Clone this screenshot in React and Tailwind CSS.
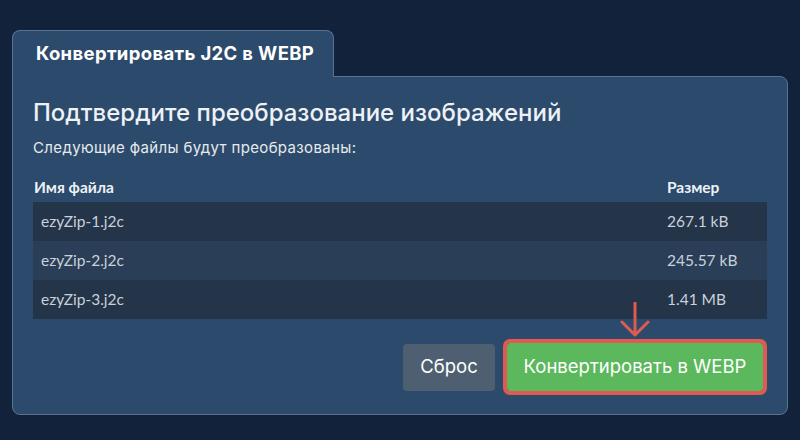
export default function App() {
  const rows = [
    { name: "ezyZip-1.j2c", size: "267.1 kB" },
    { name: "ezyZip-2.j2c", size: "245.57 kB" },
    { name: "ezyZip-3.j2c", size: "1.41 MB" },
  ];
  return (
    <div className="w-[800px] h-[440px] bg-[#11223a] pt-[30px] pl-[12px] pr-[12px] overflow-hidden" style={{ fontFamily: "Inter, 'Noto Sans', sans-serif" }}>
      <div className="relative z-10 -mb-px flex h-[47px] w-[322px] items-center rounded-t-[8px] border border-b-0 border-[#587392] bg-[#2c4a6b] pl-[23px]">
        <span className="text-[18.5px] font-bold tracking-[0.35px] text-white">Конвертировать J2C в WEBP</span>
      </div>
      <div className="h-[339px] rounded-b-[8px] rounded-tr-[8px] border border-[#587392] bg-[#2c4a6b] px-[20px] pt-[20px]">
        <h1 className="text-[24px] font-medium leading-[32px] text-[#eef1f5] tracking-[0px]">Подтвердите преобразование изображений</h1>
        <p className="mt-[9px] text-[15px] leading-[20px] tracking-[0.35px] text-[#e6eaef]">Следующие файлы будут преобразованы:</p>
        <div className="mt-[18px]" style={{ fontFamily: "Lato, 'Noto Sans', sans-serif" }}>
          <div className="flex h-[26px] items-start text-[15.5px] font-bold text-[#eef1f5]">
            <div className="flex-1 pl-[1px]">Имя файла</div>
            <div className="w-[100px]">Размер</div>
          </div>
          {rows.map((r, i) => (
            <div key={r.name} className={`flex h-[39px] items-center text-[15.5px] text-[#c9d1db] ${i % 2 === 1 ? "bg-[#2a3f57]" : "bg-[#243449]"}`}>
              <div className="flex-1 pl-[8px]">{r.name}</div>
              <div className="w-[100px]">{r.size}</div>
            </div>
          ))}
        </div>
        <div className="mt-[24px] flex items-center justify-end gap-[12px] pr-[4px]">
          <button className="h-[47px] w-[92px] rounded-[4px] bg-[#4f5f72] text-[18.5px] text-white">Сброс</button>
          <div className="relative">
            <svg className="absolute left-1/2 -translate-x-1/2 top-[-41px]" width="32" height="36" viewBox="0 0 32 36" fill="none">
              <path d="M16 1 V33 M3 20 L16 33 L29 20" stroke="#e05a52" strokeWidth="3" strokeLinecap="round" strokeLinejoin="round" />
            </svg>
            <button className="h-[48px] w-[256px] bg-[#5cb85c] text-[18.5px] text-white outline outline-[4px] outline-[#e05a52] rounded-[3px]">Конвертировать в WEBP</button>
          </div>
        </div>
      </div>
    </div>
  );
}
